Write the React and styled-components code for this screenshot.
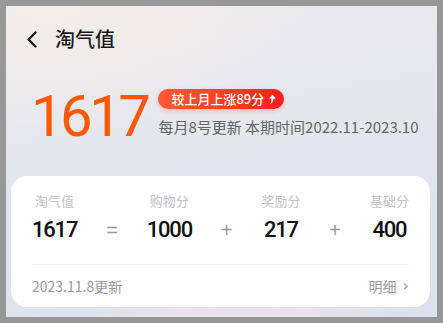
import React from "react";
import styled, { createGlobalStyle } from "styled-components";

const GlobalStyle = createGlobalStyle`
  html, body {
    margin: 0;
    padding: 0;
    background: #979797;
  }
  body {
    font-family: "Noto Sans CJK SC", "Noto Sans", sans-serif;
  }
`;

const NUM_FONT = `Roboto, "Liberation Sans", "Noto Sans CJK SC", sans-serif`;

const parts = [
  { label: "淘气值", value: "1617" },
  { op: "=" },
  { label: "购物分", value: "1000" },
  { op: "+" },
  { label: "奖励分", value: "217" },
  { op: "+" },
  { label: "基础分", value: "400" },
];

function BackIcon() {
  return (
    <svg width="12" height="17" viewBox="0 0 12 17">
      <path d="M9.5 1.5 L2.5 8.5 L9.5 15.5" fill="none" stroke="#1a1a1a" strokeWidth="2.4" strokeLinecap="round" strokeLinejoin="round" />
    </svg>
  );
}

function UpArrow() {
  return (
    <svg width="8" height="11" viewBox="0 0 8 11">
      <path d="M4.6 0.6 L8 4.8 L5.6 4.6 C5.2 7 4.2 9.2 2.2 10.6 C3.2 8.6 3.6 6.6 3.5 4.5 L1 4.6 Z" fill="#fff" />
    </svg>
  );
}

function App() {
  return (
    <>
      <GlobalStyle />
      <Frame>
        <Panel>
          <Header>
            <BackIcon />
            <Title>淘气值</Title>
          </Header>
          <Hero>
            <BigNumber>1617</BigNumber>
            <HeroInfo>
              <Badge>
                较上月上涨89分
                <UpArrow />
              </Badge>
              <Period>每月8号更新 本期时间2022.11-2023.10</Period>
            </HeroInfo>
          </Hero>
          <Card>
            <Formula>
              {parts.map((p, i) =>
                p.op ? (
                  <Op key={i}>{p.op}</Op>
                ) : (
                  <Item key={i}>
                    <Label>{p.label}</Label>
                    <Value>{p.value}</Value>
                  </Item>
                )
              )}
            </Formula>
            <Footer>
              <Updated>2023.11.8更新</Updated>
              <Detail>
                明细
                <Chevron>›</Chevron>
              </Detail>
            </Footer>
          </Card>
        </Panel>
      </Frame>
    </>
  );
}

const Frame = styled.div`
  width: 443px;
  height: 323px;
  padding: 6px 6px 6px 6px;
  box-sizing: border-box;
`;

const Panel = styled.div`
  width: 431px;
  height: 311px;
  box-sizing: border-box;
  padding: 0 7px 0 5px;
  background:
    radial-gradient(ellipse 60% 40% at 10% 0%, rgba(246, 238, 232, 0.9), rgba(246, 238, 232, 0) 100%),
    radial-gradient(ellipse 40% 30% at 55% 100%, rgba(238, 224, 232, 0.9), rgba(238, 224, 232, 0) 100%),
    linear-gradient(170deg, #eceaec 0%, #e4e6ee 45%, #dbe1ed 100%);
  display: flex;
  flex-direction: column;
`;

const Header = styled.div`
  height: 64px;
  display: flex;
  align-items: center;
  gap: 17px;
  padding-left: 15px;
  box-sizing: border-box;
  padding-top: 2px;
`;

const Title = styled.div`
  font-size: 20px;
  font-weight: 500;
  color: #1a1a1a;
  line-height: 24px;
`;

const Hero = styled.div`
  display: flex;
  align-items: flex-start;
  padding-left: 20px;
  margin-top: 17px;
  gap: 11px;
`;

const BigNumber = styled.div`
  font-family: ${NUM_FONT};
  font-size: 58px;
  line-height: 58px;
  color: #ff5800;
  letter-spacing: -3.5px;
`;

const HeroInfo = styled.div`
  display: flex;
  flex-direction: column;
  align-items: flex-start;
  padding-top: 2px;
  gap: 8px;
`;

const Badge = styled.div`
  height: 20px;
  display: flex;
  align-items: center;
  gap: 4px;
  padding: 0 8px 0 13px;
  border-radius: 10px;
  background: linear-gradient(90deg, #ff5b36 0%, #ff3a24 60%, #ff1e1e 100%);
  box-shadow: 0 2px 4px rgba(255, 60, 40, 0.25);
  color: #fff;
  font-size: 13px;
  font-weight: 500;
  line-height: 20px;
`;

const Period = styled.div`
  font-size: 15px;
  line-height: 20px;
  color: #666;
  white-space: nowrap;
`;

const Card = styled.div`
  margin-top: auto;
  margin-bottom: 10px;
  height: 131px;
  box-sizing: border-box;
  background: #fff;
  border-radius: 16px;
  padding: 16px 21px 0;
  display: flex;
  flex-direction: column;
`;

const Formula = styled.div`
  display: flex;
  justify-content: space-between;
  align-items: flex-end;
  padding-bottom: 20px;
  border-bottom: 1px solid #f2f2f4;
`;

const Item = styled.div`
  display: flex;
  flex-direction: column;
  align-items: center;
  gap: 6px;
`;

const Label = styled.div`
  font-size: 13px;
  line-height: 18px;
  color: #c2c2ca;
`;

const Value = styled.div`
  font-family: ${NUM_FONT};
  font-size: 22px;
  font-weight: 500;
  line-height: 28px;
  color: #111;
  letter-spacing: -1.2px;
`;

const Op = styled.div`
  font-family: "Liberation Sans", sans-serif;
  font-size: 20px;
  line-height: 28px;
  color: #9a9a9a;
`;

const Footer = styled.div`
  display: flex;
  justify-content: space-between;
  align-items: center;
  height: 42px;
`;

const Updated = styled.div`
  font-size: 14px;
  color: #9a9a9a;
`;

const Detail = styled.div`
  display: flex;
  align-items: center;
  gap: 6px;
  font-size: 14px;
  color: #9a9a9a;
`;

const Chevron = styled.span`
  font-family: "DejaVu Sans", sans-serif;
  font-size: 16px;
  line-height: 14px;
`;

export default App;
